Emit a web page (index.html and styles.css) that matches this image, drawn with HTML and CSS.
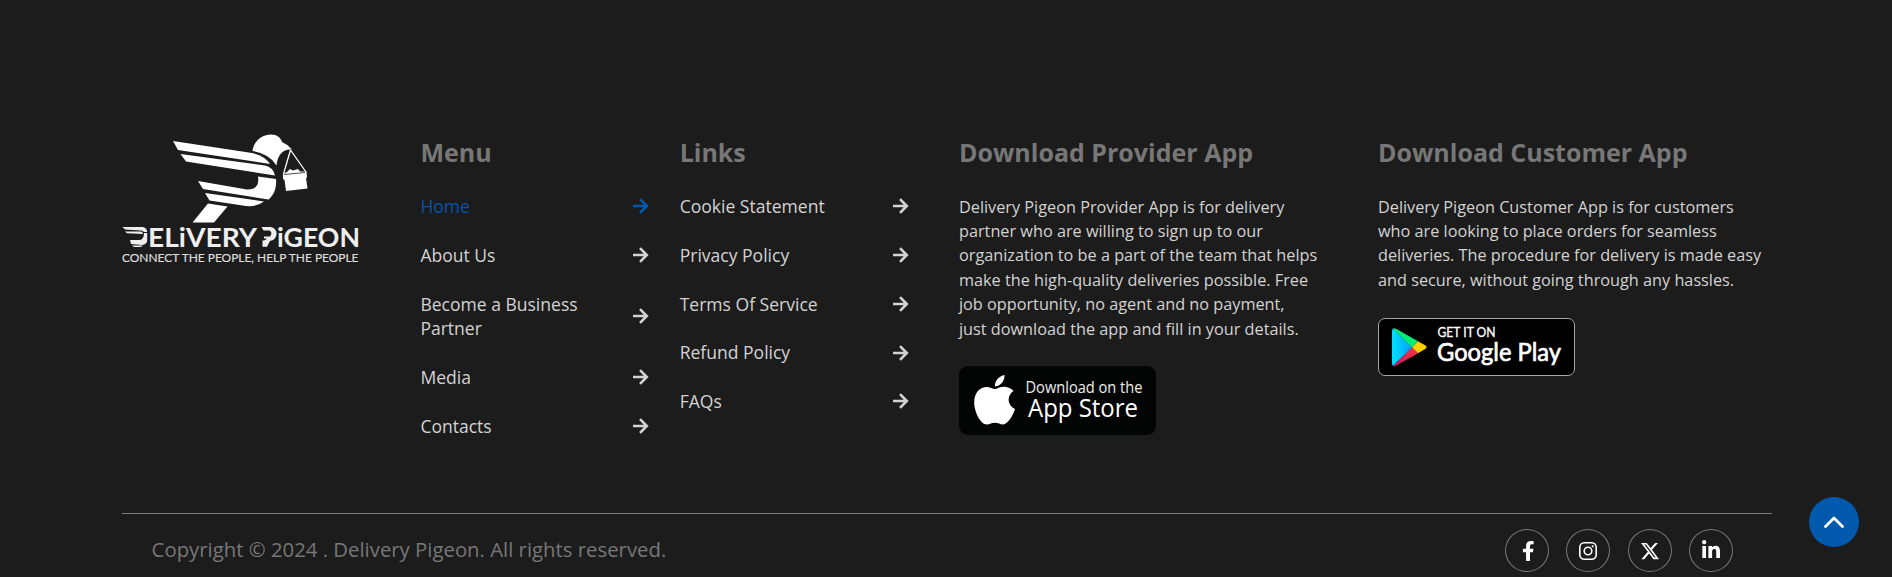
FILE: index.html
```html
<!DOCTYPE html>
<html lang="en">
<head>
<meta charset="utf-8">
<title>Delivery Pigeon</title>
<link rel="stylesheet" href="styles.css">
</head>
<body>
<svg class="defs" aria-hidden="true">
  <symbol id="arrow" viewBox="0 0 16 16"><path d="M0 8H14M7 1.200L13.800 8L7 14.800" fill="none" stroke="currentColor" stroke-width="2.600"/></symbol>
</svg>
<footer class="footer">
  <div class="columns">
    <a class="logo" href="#">
      <svg viewBox="0 0 260 150" width="260" height="150" role="img" aria-label="Delivery Pigeon">
        <g fill="#fff">
          <path d="M63 21L142 33Q155 36 160 44L68 30Z"/>
          <path d="M70.500 34L155 45.500Q163 47 165 55.500L76 41.500Z"/>
          <path d="M142.500 31C144 20 153 14.500 161 14.500C167 14.500 171 18 172 22Q178 24.500 182 29.500C174 29 168 33 166.500 45.500Q160 34 142.500 31Z"/>
          <path d="M148 56.500L166 59C167 69 163 76 158.500 79.500L93 69L88 61L137 69.500Q150 70 148 56.500Z"/>
          <path d="M95 73L154 81.500Q147 87 136 86L99.500 80.500Z"/>
          <path d="M98 83.500L117.500 86.500L104 102.500H82.500Z"/>
          <path d="M173 54L177 52L180 49L183 50.500L188 49L190 51.500L196.500 51.500L197 57.500L196 58L197.500 68.500L176 71L174.500 60L173 59Z"/>
        </g>
        <path d="M180.500 30L173.500 54M180.500 30L196 52" fill="none" stroke="#fff" stroke-width="1.300"/>
        <path d="M174 54.500L195 52.500" stroke="#1c1c1c" stroke-width=".8"/>
        <g fill="#eee">
          <path d="M12.500 107H33Q37 108 37.200 112H34Q33 110.500 31 110.500L15 109.500Z"/>
          <path d="M15 111.500H31Q33 112 33 114L17 113.300Z"/>
          <path d="M34 113H37.200V121Q36.500 124.500 32 125L21 124L20 120H30Q34 119 34 113Z"/>
          <path d="M22 125.500H33L31 127H24Z"/>
          <path d="M151.500 107H161Q167 108.500 166.500 114.500Q165.500 120 160 121L157 126.800H152.500V120.500Q155 121 157 118.500H154V116.500H160Q163 112.500 159.500 110.500H153.500Z"/>
        </g>
        <g class="logo-name">
          <text x="38" y="126.700" textLength="109" lengthAdjust="spacingAndGlyphs">ELiVERY</text>
          <text x="167" y="126.700" textLength="83" lengthAdjust="spacingAndGlyphs">iGEON</text>
        </g>
        <text class="logo-tag" x="12" y="141.500" textLength="236.500" lengthAdjust="spacingAndGlyphs">CONNECT THE PEOPLE, HELP THE PEOPLE</text>
      </svg>
    </a>
    <nav class="column">
      <h2 class="title">Menu</h2>
      <ul class="links">
        <li><a class="link active" href="#"><span>Home</span><svg class="arrow"><use href="#arrow"/></svg></a></li>
        <li><a class="link" href="#"><span>About Us</span><svg class="arrow"><use href="#arrow"/></svg></a></li>
        <li><a class="link" href="#"><span>Become a Business Partner</span><svg class="arrow"><use href="#arrow"/></svg></a></li>
        <li><a class="link" href="#"><span>Media</span><svg class="arrow"><use href="#arrow"/></svg></a></li>
        <li><a class="link" href="#"><span>Contacts</span><svg class="arrow"><use href="#arrow"/></svg></a></li>
      </ul>
    </nav>
    <nav class="column">
      <h2 class="title">Links</h2>
      <ul class="links">
        <li><a class="link" href="#"><span>Cookie Statement</span><svg class="arrow"><use href="#arrow"/></svg></a></li>
        <li><a class="link" href="#"><span>Privacy Policy</span><svg class="arrow"><use href="#arrow"/></svg></a></li>
        <li><a class="link" href="#"><span>Terms Of Service</span><svg class="arrow"><use href="#arrow"/></svg></a></li>
        <li><a class="link" href="#"><span>Refund Policy</span><svg class="arrow"><use href="#arrow"/></svg></a></li>
        <li><a class="link" href="#"><span>FAQs</span><svg class="arrow"><use href="#arrow"/></svg></a></li>
      </ul>
    </nav>
    <section class="column">
      <h2 class="title">Download Provider App</h2>
      <p class="text">Delivery Pigeon Provider App is for delivery<br>partner who are willing to sign up to our<br>organization to be a part of the team that helps<br>make the high-quality deliveries possible. Free<br>job opportunity, no agent and no payment,<br>just download the app and fill in your details.</p>
      <a class="badge" href="#">
        <svg viewBox="0 0 197 69" width="197" height="69" role="img" aria-label="Download on the App Store">
          <rect width="197" height="69" rx="9" fill="#030504"/>
          <path fill="#fff" d="M45.500 9C46 14 42 20 36 20.500C35.500 15 40 10 45.500 9ZM54.500 25C48 29 47.500 39 56 43C54 49.500 49 58 44 58.500C41 58.500 39.500 56.800 36 56.800C32.500 56.800 31 58.500 28 58.500C21 58.500 15.200 45 15.200 36.500C15.200 26 21.500 21 27.500 21C31 21 34 23 36 23C38 23 41.500 20.500 45.500 20.800C49 21 52.500 22.500 54.500 25Z"/>
          <text class="apple-small" x="66.500" y="26.800" textLength="117" lengthAdjust="spacingAndGlyphs">Download on the</text>
          <text class="apple-large" x="69" y="51.200" textLength="110" lengthAdjust="spacingAndGlyphs">App Store</text>
        </svg>
      </a>
    </section>
    <section class="column">
      <h2 class="title">Download Customer App</h2>
      <p class="text">Delivery Pigeon Customer App is for customers<br>who are looking to place orders for seamless<br>deliveries. The procedure for delivery is made easy<br>and secure, without going through any hassles.</p>
      <a class="badge google" href="#">
        <svg viewBox="0 0 197 58" width="197" height="58" role="img" aria-label="Get it on Google Play">
          <defs>
            <linearGradient id="play" x1="1" x2="0"><stop stop-color="#00a0ff"/><stop offset="1" stop-color="#00dfff"/></linearGradient>
            <linearGradient id="red" x1="1" x2="0" y2="1"><stop stop-color="#ff3a44"/><stop offset="1" stop-color="#c31162"/></linearGradient>
          </defs>
          <rect x=".5" y=".5" width="196" height="57" rx="6.500" fill="#000" stroke="#a6a6a6"/>
          <path fill="url(#play)" d="M15 10.500L34 29.500L15 48Q14 47 14 45V13Q14 11.500 15 10.500Z"/>
          <path fill="#00ef76" d="M15 10.500Q16 9.800 18 10.800L40 23.300L34 29.500Z"/>
          <path fill="#ffd000" d="M40 23.300L47.500 27.500Q49.500 29.200 47.500 30.800L40 35.300L34 29.500Z"/>
          <path fill="url(#red)" d="M34 29.500L40 35.300L18 47.700Q16 48.600 15 48Z"/>
          <text class="play-small" x="59.500" y="19.200" textLength="58" lengthAdjust="spacingAndGlyphs">GET IT ON</text>
          <text class="play-large" x="59" y="43" textLength="124" lengthAdjust="spacingAndGlyphs">Google Play</text>
        </svg>
      </a>
    </section>
  </div>
  <div class="bottom">
    <p class="copyright">Copyright © 2024 . Delivery Pigeon. All rights reserved.</p>
    <div class="socials">
      <a class="social" href="#" aria-label="Facebook"><svg class="facebook" viewBox="0 0 320 512" width="12.500" height="20"><path d="M279.140 288l14.220-92.660h-88.910v-60.130c0-25.350 12.420-50.060 52.240-50.060h40.420V6.260S260.430 0 225.360 0c-73.220 0-121.080 44.380-121.080 124.720v70.620H22.890V288h81.390v224h100.170V288z"/></svg></a>
      <a class="social" href="#" aria-label="Instagram"><svg viewBox="0 0 18 18" width="18" height="18"><rect x=".8" y=".8" width="16.400" height="16.400" rx="4.500" fill="none" stroke="#fff" stroke-width="1.600"/><circle cx="9" cy="9" r="3.800" fill="none" stroke="#fff" stroke-width="1.600"/><circle cx="13.700" cy="4.300" r="1.100"/></svg></a>
      <a class="social" href="#" aria-label="X"><svg viewBox="0 0 24 24" width="20" height="20"><path d="M18.244 2.250h3.308l-7.227 8.260 8.502 11.240H16.170l-5.214-6.817L4.990 21.750H1.680l7.730-8.835L1.254 2.250H8.080l4.713 6.231zm-1.161 17.520h1.833L7.084 4.126H5.117z"/></svg></a>
      <a class="social" href="#" aria-label="LinkedIn"><svg viewBox="0 0 448 512" width="18" height="20.500"><path d="M100.280 448H7.400V148.900h92.880zM53.790 108.100C24.090 108.100 0 83.500 0 53.800a53.790 53.790 0 0 1 107.580 0c0 29.700-24.100 54.300-53.790 54.300zM447.900 448h-92.680V302.400c0-34.700-.7-79.200-48.290-79.200-48.290 0-55.690 37.700-55.690 76.700V448h-92.780V148.900h89.080v40.800h1.300c12.400-23.500 42.690-48.300 87.880-48.300 94 0 111.280 61.900 111.280 142.300V448z"/></svg></a>
    </div>
  </div>
</footer>
<a class="to-top" href="#" aria-label="Back to top"><svg viewBox="0 0 20 12" width="20" height="12"><path d="M1.500 10.500L10 2L18.500 10.500" fill="none" stroke="#fff" stroke-width="2.800" stroke-linecap="round" stroke-linejoin="round"/></svg></a>
</body>
</html>
```
FILE: styles.css
```css
* { box-sizing: border-box; }
body {
  margin: 0;
  height: 577px;
  overflow: hidden;
  background: #1c1c1c;
  color: #d3d3d3;
  font-family: "Open Sans", sans-serif;
}
a { color: inherit; text-decoration: none; }
.defs { position: absolute; width: 0; height: 0; }
.footer { width: 1650px; margin-left: 122px; padding-top: 135px; }
.columns {
  display: grid;
  grid-template-columns: 298.400px 259.300px 279.300px 419px 394px;
  height: 378px;
}
.logo { display: block; margin: -15px 0 0 -12px; }
.logo svg { display: block; }
.logo-name { font: 700 27.500px Lato, sans-serif; fill: #eee; }
.logo-tag { font: 400 12.300px Lato, sans-serif; fill: #ddd; stroke: #ddd; stroke-width: .2px; }
.title {
  margin: 0 0 19px;
  color: #777;
  font-size: 25px;
  line-height: 35px;
  font-weight: 700;
}
.links { list-style: none; margin: 0; padding: 5px 0 0; width: 229px; }
.links li { margin-bottom: 24.300px; }
.link { display: flex; align-items: center; justify-content: space-between; font-size: 17.550px; line-height: 24.500px; }
.link span { max-width: 180px; }
.link.active { color: #0353ac; }
.link.active .arrow { color: #0059ac; }
.arrow { width: 16px; height: 16px; flex: none; }
.text { margin: 0 0 24.600px; padding-top: 5.500px; font-size: 16.260px; line-height: 24.400px; white-space: nowrap; }
.badge, .badge svg { display: block; }
.google { margin-top: 26px; }
.apple-small { font: 400 15.500px "Open Sans", sans-serif; fill: #eee; }
.apple-large { font: 400 25px "Open Sans", sans-serif; fill: #fff; }
.play-small { font: 400 13px Lato, sans-serif; fill: #fff; stroke: #fff; stroke-width: .3px; }
.play-large { font: 400 25px Lato, sans-serif; fill: #fff; stroke: #fff; stroke-width: .7px; }
.bottom {
  display: flex;
  justify-content: space-between;
  align-items: flex-start;
  border-top: 1px solid #7b7b7b;
  padding: 15px 39px 0 29.600px;
}
.copyright { margin: 7px 0 0; color: #777; font-size: 20.340px; line-height: 27px; white-space: nowrap; }
.socials { display: flex; gap: 17.300px; }
.social { display: flex; align-items: center; justify-content: center; width: 44px; height: 43px; border: 1px solid #777; border-radius: 50%; }
.social svg { fill: #fff; }
.facebook { margin-left: 2px; }
.to-top {
  position: absolute;
  left: 1809px;
  top: 497px;
  width: 50px;
  height: 50px;
  display: flex;
  align-items: center;
  justify-content: center;
  border-radius: 50%;
  background: #0059ac;
}
```
